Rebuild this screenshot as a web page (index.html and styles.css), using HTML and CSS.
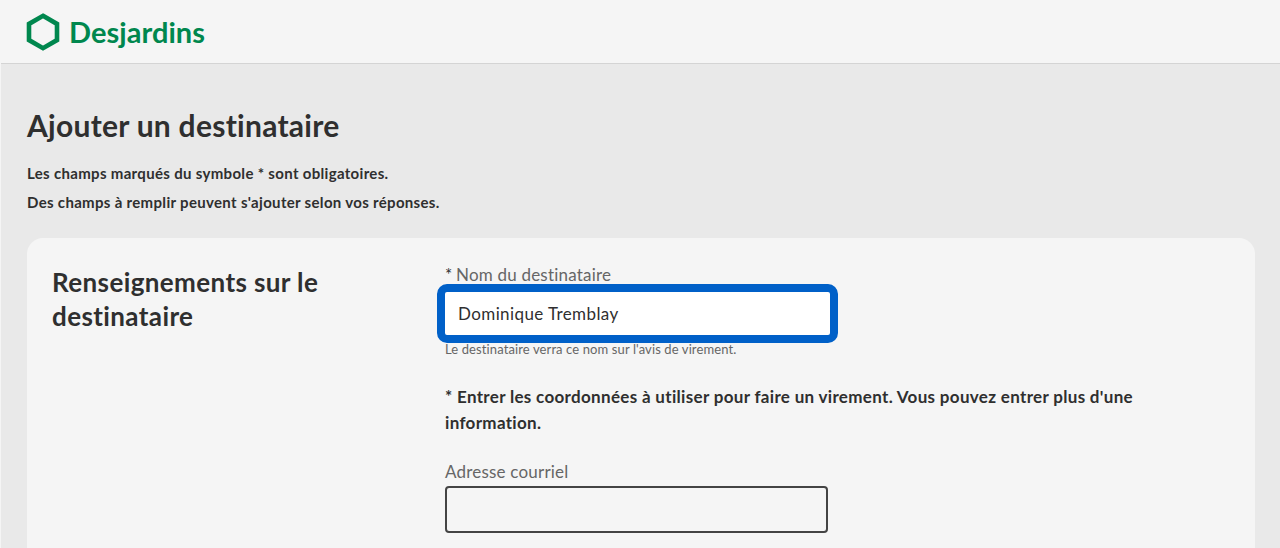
FILE: index.html
```html
<!DOCTYPE html>
<html lang="fr">
<head>
<meta charset="utf-8">
<title>Ajouter un destinataire</title>
<link rel="stylesheet" href="styles.css">
</head>
<body>
<header class="topbar">
  <svg class="logo-mark" width="34" height="38" viewBox="0 0 34 38" aria-hidden="true">
    <path d="M17 2.8 L31 10.9 V27.1 L17 35.2 L3 27.1 V10.9 Z" fill="none" stroke="#00874e" stroke-width="4.6" stroke-linejoin="miter"/>
  </svg>
  <span class="logo-text">Desjardins</span>
</header>
<main class="page">
  <h1 class="title">Ajouter un destinataire</h1>
  <p class="note">Les champs marqués du symbole * sont obligatoires.</p>
  <p class="note">Des champs à remplir peuvent s'ajouter selon vos réponses.</p>
  <section class="card">
    <h2 class="card-title">Renseignements sur le destinataire</h2>
    <div class="form">
      <label class="label label-first"><span class="star">*</span> Nom du destinataire</label>
      <div class="input input-focus">Dominique Tremblay</div>
      <p class="help">Le destinataire verra ce nom sur l'avis de virement.</p>
      <p class="instruction">* Entrer les coordonnées à utiliser pour faire un virement. Vous pouvez entrer plus d'une information.</p>
      <label class="label label-second">Adresse courriel</label>
      <div class="input input-empty"></div>
    </div>
  </section>
</main>
</body>
</html>
```
FILE: styles.css
```css
* { box-sizing: border-box; }
html, body { margin: 0; height: 100%; overflow: hidden; }
body {
  background: #e9e9e9;
  color: #2f2f2f;
  font-family: Lato, "Noto Sans", sans-serif;
  border-left: 1px solid #f5f5f5;
}
.topbar {
  height: 64px;
  background: #f5f5f5;
  border-bottom: 1px solid #d4d4d4;
  display: flex;
  align-items: center;
  gap: 9px;
  padding: 0 0 0 25px;
}
.logo-mark { flex: none; }
.logo-text {
  font-size: 29px;
  font-weight: 700;
  color: #00874e;
  line-height: 1;
  letter-spacing: 0.05px;
}
.page { padding: 43px 25px 0 26px; }
.title {
  margin: 0 0 21px;
  font-size: 30px;
  line-height: 36px;
  font-weight: 700;
  letter-spacing: 0.27px;
  color: #2f2f2f;
}
.note {
  margin: 0 0 11px;
  font-size: 15px;
  line-height: 18px;
  font-weight: 700;
  letter-spacing: 0.32px;
}
.note + .note { margin-bottom: 0; }
.card {
  margin-top: 27px;
  background: #f5f5f5;
  border-radius: 16px;
  height: 400px;
  padding: 27px 25px;
  display: flex;
}
.card-title {
  margin: 0;
  width: 393px;
  flex: none;
  padding-right: 60px;
  font-size: 26px;
  line-height: 34px;
  font-weight: 700;
  letter-spacing: 0.39px;
  color: #2f2f2f;
}
.form { width: 700px; flex: none; }
.label {
  display: block;
  font-size: 17px;
  line-height: 19px;
  letter-spacing: 0.2px;
  color: #666;
}
.star { color: #2f2f2f; margin-right: -1px; }
.input { width: 383px; }
.input-focus {
  width: 401px;
  height: 59px;
  margin: 0 0 0 -8px;
  background: #fff;
  border: 8px solid #0060c8;
  border-radius: 10px;
  padding: 0 0 0 13px;
  display: flex;
  align-items: center;
  font-size: 17px;
  letter-spacing: 0.4px;
  color: #2f2f2f;
}
.help {
  margin: -1px 0 0;
  font-size: 13px;
  line-height: 14px;
  letter-spacing: 0.11px;
  color: #666;
}
.instruction {
  margin: 28px 0 0;
  width: 700px;
  font-size: 17px;
  line-height: 26px;
  font-weight: 700;
  letter-spacing: 0.32px;
  color: #2f2f2f;
}
.label-second { margin-top: 26px; }
.input-empty {
  height: 47px;
  margin-top: 5px;
  background: #f5f5f5;
  border: 2px solid #444;
  border-radius: 4px;
}
```
